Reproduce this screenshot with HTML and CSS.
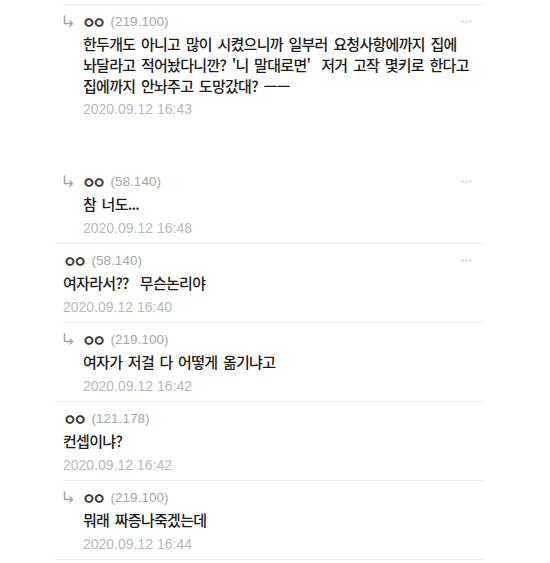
FILE: index.html
```html
<!DOCTYPE html>
<html lang="ko">
<head>
  <meta charset="UTF-8" />
  <meta name="viewport" content="width=device-width, initial-scale=1" />
  <title>댓글</title>
  <link rel="stylesheet" href="styles.css">
</head>
<body>
  <div class="comments">
    <div class="top-rule"></div>

    <div class="comment reply comment--last-in-group">
      <div class="comment-head">
        <svg class="reply-arrow" width="11" height="12" viewBox="0 0 11 12"><path d="M1.5 1 V8.5 H9.5 M7 6 L9.5 8.5 L7 11" fill="none" stroke="#a3a3a3" stroke-width="1.5" stroke-linecap="round" stroke-linejoin="round"/></svg>
        <span class="nick">ㅇㅇ</span>
        <span class="ip">(219.100)</span>
        <svg class="more" width="11" height="3" viewBox="0 0 11 3"><circle cx="1.5" cy="1.5" r="1.1"/><circle cx="5.5" cy="1.5" r="1.1"/><circle cx="9.5" cy="1.5" r="1.1"/></svg>
      </div>
      <p class="comment-text multi">한두개도 아니고 많이 시켰으니까 일부러 요청사항에까지 집에 놔달라고 적어놨다니깐? '니 말대로면'&nbsp; 저거 고작 몇키로 한다고 집에까지 안놔주고 도망갔대? ㅡㅡ</p>
      <div class="comment-date">2020.09.12 16:43</div>
    </div>

    <div class="comment reply">
      <div class="comment-head">
        <svg class="reply-arrow" width="11" height="12" viewBox="0 0 11 12"><path d="M1.5 1 V8.5 H9.5 M7 6 L9.5 8.5 L7 11" fill="none" stroke="#a3a3a3" stroke-width="1.5" stroke-linecap="round" stroke-linejoin="round"/></svg>
        <span class="nick">ㅇㅇ</span>
        <span class="ip">(58.140)</span>
        <svg class="more" width="11" height="3" viewBox="0 0 11 3"><circle cx="1.5" cy="1.5" r="1.1"/><circle cx="5.5" cy="1.5" r="1.1"/><circle cx="9.5" cy="1.5" r="1.1"/></svg>
      </div>
      <p class="comment-text">참 너도...</p>
      <div class="comment-date">2020.09.12 16:48</div>
    </div>

    <div class="comment">
      <div class="comment-head">
        <span class="nick">ㅇㅇ</span>
        <span class="ip">(58.140)</span>
        <svg class="more" width="11" height="3" viewBox="0 0 11 3"><circle cx="1.5" cy="1.5" r="1.1"/><circle cx="5.5" cy="1.5" r="1.1"/><circle cx="9.5" cy="1.5" r="1.1"/></svg>
      </div>
      <p class="comment-text">여자라서??&nbsp; 무슨논리야</p>
      <div class="comment-date">2020.09.12 16:40</div>
    </div>

    <div class="comment reply">
      <div class="comment-head">
        <svg class="reply-arrow" width="11" height="12" viewBox="0 0 11 12"><path d="M1.5 1 V8.5 H9.5 M7 6 L9.5 8.5 L7 11" fill="none" stroke="#a3a3a3" stroke-width="1.5" stroke-linecap="round" stroke-linejoin="round"/></svg>
        <span class="nick">ㅇㅇ</span>
        <span class="ip">(219.100)</span>
      </div>
      <p class="comment-text">여자가 저걸 다 어떻게 옮기냐고</p>
      <div class="comment-date">2020.09.12 16:42</div>
    </div>

    <div class="comment">
      <div class="comment-head">
        <span class="nick">ㅇㅇ</span>
        <span class="ip">(121.178)</span>
      </div>
      <p class="comment-text">컨셉이냐?</p>
      <div class="comment-date">2020.09.12 16:42</div>
    </div>

    <div class="comment reply">
      <div class="comment-head">
        <svg class="reply-arrow" width="11" height="12" viewBox="0 0 11 12"><path d="M1.5 1 V8.5 H9.5 M7 6 L9.5 8.5 L7 11" fill="none" stroke="#a3a3a3" stroke-width="1.5" stroke-linecap="round" stroke-linejoin="round"/></svg>
        <span class="nick">ㅇㅇ</span>
        <span class="ip">(219.100)</span>
      </div>
      <p class="comment-text">뭐래 짜증나죽겠는데</p>
      <div class="comment-date">2020.09.12 16:44</div>
    </div>
  </div>
</body>
</html>
```

FILE: styles.css
```css
body {
  margin: 0;
  background: #fff;
  font-family: "Noto Sans CJK KR", sans-serif;
  color: #1c1c1c;
}
.comments {
  margin-left: 55px;
  width: 429px;
  padding-top: 4px;
}
.top-rule {
  margin-left: 8px;
  border-top: 1px solid #ededed;
}
.comment {
  margin-left: 8px;
  padding: 6px 2px 5px 0;
  border-bottom: 1px solid #ececec;
}
.comment.reply {
  margin-left: 0;
  padding-left: 8px;
}
.comment--last-in-group {
  border-bottom: none;
  margin-bottom: 41px;
}
.comment-head {
  display: flex;
  align-items: center;
  height: 20px;
}
.reply-arrow {
  margin-right: 8px;
}
.nick {
  font-size: 15px;
  font-weight: 700;
  letter-spacing: -3.5px;
  color: #3a3a3a;
  margin-right: 8px;
}
.ip {
  font-family: "Liberation Sans", sans-serif;
  font-size: 13.5px;
  color: #a6a6a6;
}
.more {
  margin-left: auto;
  margin-right: 10px;
  fill: #c4c4c4;
}
.comment-text {
  margin: 2px 0 0;
  font-size: 15px;
  font-weight: 500;
  line-height: 22px;
  letter-spacing: -0.7px;
  word-spacing: 2px;
  word-break: keep-all;
}
.comment-text.multi {
  line-height: 21px;
}
.comment-date {
  margin-top: 3px;
  font-family: "Liberation Sans", sans-serif;
  font-size: 14px;
  line-height: 20px;
  color: #b9b9b9;
}
.reply .comment-text,
.reply .comment-date {
  margin-left: 20px;
}
```
